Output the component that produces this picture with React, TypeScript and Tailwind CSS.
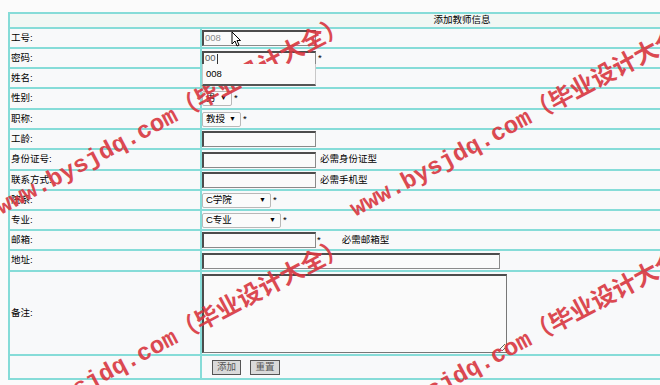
import type { ReactNode } from "react";

const font = { fontFamily: '"Liberation Sans", "Noto Sans CJK SC", sans-serif' };

function Row({ label, h, children }: { label: string; h: string; children?: ReactNode }) {
  return (
    <div className={`flex gap-[2px] ${h}`}>
      <div className="flex w-[190px] items-center bg-[#f8f9fa] pl-[1px]">{label}</div>
      <div className="relative flex flex-1 items-center bg-[#f8f9fa]">{children}</div>
    </div>
  );
}

function Field({ w = "w-[114px]", value }: { w?: string; value?: ReactNode }) {
  return (
    <div
      className={`${w} flex h-[16px] items-center border-t-2 border-l-2 border-r border-b border-t-[#4c4c4c] border-l-[#4c4c4c] border-r-[#8a8a8a] border-b-[#8a8a8a] bg-[#fafafa] pl-[1px] text-[#8a8a8a]`}
    >
      {value}
    </div>
  );
}

function Pick({ w, value }: { w: string; value: string }) {
  return (
    <div
      className={`${w} flex h-[15px] items-center justify-between rounded-[2px] border border-[#b8b8b8] bg-[#fbfbfb] pl-[3px] pr-[4px]`}
    >
      <span>{value}</span>
      <span className="text-[7px]">▼</span>
    </div>
  );
}

function Mark({ left, top }: { left: number; top: number }) {
  return (
    <div
      className="pointer-events-none absolute origin-bottom-left whitespace-nowrap text-[24px] leading-none font-semibold text-[#d8363f] opacity-90"
      style={{
        left,
        top: top - 24,
        transform: "rotate(-28deg)",
        fontFamily: '"Liberation Mono", "Noto Sans CJK SC", monospace',
      }}
    >
      www.bysjdq.com（毕业设计大全）
    </div>
  );
}

export default function App() {
  return (
    <div className="relative h-[385px] w-[660px] overflow-hidden bg-[#fbfbfb] text-[9.5px] text-black" style={font}>
      <div className="ml-[8px] mt-[12px] flex w-[908px] flex-col gap-[2px] bg-[#86dcd8] p-[2px]">
        <div className="flex h-[13px] items-center justify-center bg-[#f1f7f4]">添加教师信息</div>

        <Row label="工号:" h="h-[18px]">
          <Field value="008" />
          <svg className="absolute left-[29px] top-[2px]" width="10" height="16" viewBox="0 0 10 16">
            <path d="M1 1 L1 13 L4 10 L6 15 L8 14 L6 9.5 L9.5 9.5 Z" fill="#fff" stroke="#000" strokeWidth="1" />
          </svg>
        </Row>
        <Row label="密码:" h="h-[18px]">
          <div className="flex h-[15px] w-[114px] items-center border-t-2 border-l-2 border-r border-b border-t-[#4c4c4c] border-l-[#4c4c4c] border-r-[#8a8a8a] border-b-[#8a8a8a] bg-[#fafafa] pl-[1px] text-[#555]">
            00
            <span className="ml-[1px] h-[10px] w-px bg-[#333]" />
          </div>
          <span className="ml-[2px]">*</span>
          <div className="absolute left-0 top-[15px] z-10 flex h-[22px] w-[114px] items-center border-x border-b-2 border-x-[#c8c8c8] border-b-[#555] bg-[#fafafa] pl-[3px]">
            008
          </div>
        </Row>
        <Row label="姓名:" h="h-[18px]" />
        <Row label="性别:" h="h-[19px]">
          <Pick w="w-[30px]" value="男" />
          <span className="ml-[2px]">*</span>
        </Row>
        <Row label="职称:" h="h-[18px]">
          <Pick w="w-[39px]" value="教授" />
          <span className="ml-[2px]">*</span>
        </Row>
        <Row label="工龄:" h="h-[18px]">
          <Field />
        </Row>
        <Row label="身份证号:" h="h-[19px]">
          <Field />
          <span className="ml-[4px]">必需身份证型</span>
        </Row>
        <Row label="联系方式:" h="h-[18px]">
          <Field />
          <span className="ml-[4px]">必需手机型</span>
        </Row>
        <Row label="院系:" h="h-[18px]">
          <Pick w="w-[69px]" value="C学院" />
          <span className="ml-[2px]">*</span>
        </Row>
        <Row label="专业:" h="h-[18px]">
          <Pick w="w-[79px]" value="C专业" />
          <span className="ml-[2px]">*</span>
        </Row>
        <Row label="邮箱:" h="h-[18px]">
          <Field />
          <span className="ml-[1px]">*</span>
          <span className="ml-[21px]">必需邮箱型</span>
        </Row>
        <Row label="地址:" h="h-[19px]">
          <Field w="w-[298px]" />
        </Row>
        <Row label="备注:" h="h-[82px]">
          <textarea className="h-[79px] w-[305px] resize border-t-2 border-l-2 border-r border-b border-t-[#4c4c4c] border-l-[#4c4c4c] border-r-[#777] border-b-[#777] bg-[#fafafa] outline-none" />
        </Row>
        <Row label="" h="h-[22px]">
          <div className="ml-[10px] flex gap-[9px]">
            <button className="flex h-[15px] w-[29px] items-center justify-center border border-[#555] bg-[#dadada] text-[#555]">
              添加
            </button>
            <button className="flex h-[15px] w-[30px] items-center justify-center border border-[#555] bg-[#dadada] text-[#555]">
              重置
            </button>
          </div>
        </Row>
      </div>

      <Mark left={4} top={220} />
      <Mark left={358} top={222} />
      <Mark left={4} top={442} />
      <Mark left={358} top={444} />
    </div>
  );
}
